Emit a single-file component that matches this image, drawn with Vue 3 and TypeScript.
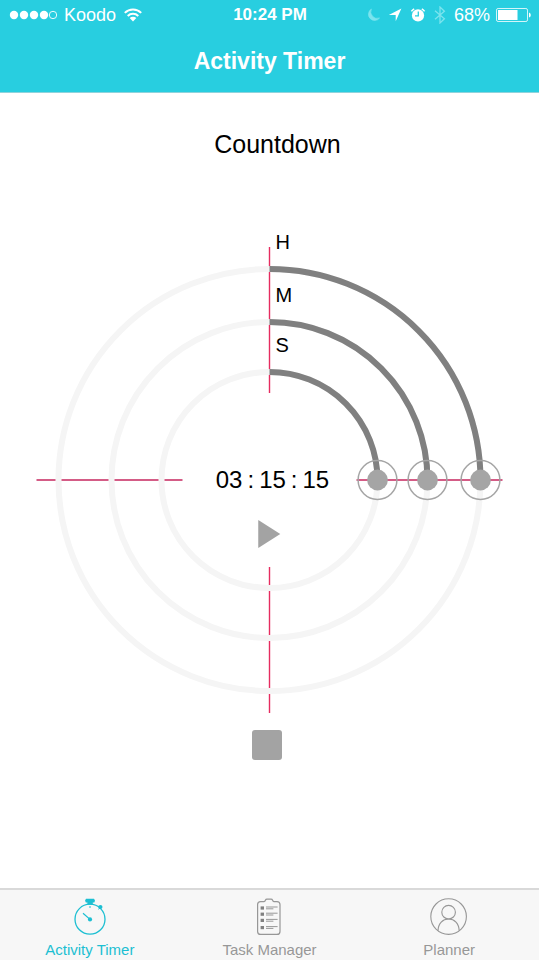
<script setup lang="ts">
import { computed, reactive, ref } from 'vue'

interface Unit {
  key: 'h' | 'm' | 's'
  label: string
  steps: number
  radius: number
}

const units: Unit[] = [
  { key: 'h', label: 'H', steps: 12, radius: 211 },
  { key: 'm', label: 'M', steps: 60, radius: 158 },
  { key: 's', label: 'S', steps: 60, radius: 108 },
]

const values = reactive({ h: 3, m: 15, s: 15 })
const running = ref(false)
const activeTab = ref('timer')

const tabs = [
  { id: 'timer', label: 'Activity Timer' },
  { id: 'tasks', label: 'Task Manager' },
  { id: 'planner', label: 'Planner' },
]

// The svg canvas is 479 x 500 with the dial's centre at its origin.
const rings = computed(() =>
  units.map((unit) => {
    const angle = (values[unit.key] / unit.steps) * Math.PI * 2
    const x = Math.sin(angle) * unit.radius
    const y = -Math.cos(angle) * unit.radius
    const large = angle > Math.PI ? 1 : 0
    return {
      ...unit,
      x,
      y,
      arc: `M0 ${-unit.radius}A${unit.radius} ${unit.radius} 0 ${large} 1 ${x} ${y}`,
      place: { left: `${((x + 239.5) / 479) * 100}%`, top: `${((y + 250) / 500) * 100}%` },
    }
  }),
)

const digits = computed(() => units.map((unit) => String(values[unit.key]).padStart(2, '0')))

function stop() {
  running.value = false
}
</script>

<template>
  <div class="screen">
    <header class="top">
      <div class="status">
        <div class="status-side">
          <svg class="signal" width="48" height="10" viewBox="0 0 48 10" aria-hidden="true">
            <circle v-for="n in 4" :key="n" :cx="n * 10 - 5" cy="5" r="4.2" fill="#fff" />
            <circle cx="44" cy="5" r="3.7" fill="none" stroke="#fff" stroke-width="0.9" />
          </svg>
          <span>Koodo</span>
          <svg class="wifi" width="18" height="14" viewBox="0 0 18 14" aria-hidden="true">
            <g fill="none" stroke="#fff" stroke-width="2">
              <path d="M0.8 4.9A11.8 11.8 0 0 1 17.2 4.9" />
              <path d="M3.7 8A7.6 7.6 0 0 1 14.3 8" />
            </g>
            <path d="M9 13.4L5.7 10A4.7 4.7 0 0 1 12.3 10Z" fill="#fff" />
          </svg>
        </div>
        <strong class="clock">10:24 PM</strong>
        <div class="status-side end">
          <svg width="13" height="14" viewBox="0 0 13 14" aria-hidden="true">
            <path d="M4.4 1A6.2 6.2 0 1 0 12.6 10A6.6 6.6 0 0 1 4.4 1Z" fill="#7ce4ee" stroke="#7ce4ee" stroke-width="0.6" />
          </svg>
          <svg width="14" height="14" viewBox="0 0 14 14" aria-hidden="true">
            <path d="M13.4 0.6L7.7 13.2V7H0.8Z" fill="#fff" />
          </svg>
          <svg width="16" height="14" viewBox="0 0 16 14" aria-hidden="true">
            <circle cx="8" cy="7.4" r="6.1" fill="#fff" />
            <path d="M1.4 3.4A8 8 0 0 1 4.2 0.8M14.6 3.4A8 8 0 0 0 11.8 0.8" stroke="#fff" stroke-width="1.5" fill="none" />
            <path d="M8.3 3.6V7.9H5" stroke="#28cee0" stroke-width="1.3" fill="none" />
          </svg>
          <svg width="12" height="18" viewBox="0 0 12 18" aria-hidden="true">
            <path d="M1 4.8L10.4 12.8L6 17V1L10.4 5.2L1 13.2" fill="none" stroke="#7ce4ee" stroke-width="1.3" />
          </svg>
          <span>68%</span>
          <svg class="battery" width="35" height="14" viewBox="0 0 35 14" aria-hidden="true">
            <rect x="0.5" y="0.5" width="31" height="13" rx="1.6" fill="none" stroke="#fff" stroke-opacity="0.8" />
            <rect x="2" y="2" width="19.5" height="10" fill="#fff" />
            <path d="M33 4.4Q34.8 5 34.8 7T33 9.6Z" fill="#fff" />
          </svg>
        </div>
      </div>
      <h1 class="title">Activity Timer</h1>
    </header>

    <main class="content">
      <h2 class="mode">Countdown</h2>

      <div class="dial">
        <svg class="dial-art" viewBox="-239.5 -250 479 500">
          <g fill="none" stroke="#f5f5f5" stroke-width="6">
            <circle v-for="ring in rings" :key="ring.key" :r="ring.radius" />
          </g>
          <g class="axis">
            <path d="M0 -233V-214M0 -208V-161M0 -155V-111M0 -105V-87" />
            <path d="M0 87V105M0 111V155M0 161V208M0 214V233" />
          </g>
          <g class="axis across">
            <path d="M-233 0H-214M-208 0H-161M-155 0H-111M-105 0H-87" />
            <path d="M87 0H233" />
          </g>
          <g fill="none" stroke="#808080" stroke-width="6">
            <path v-for="ring in rings" :key="ring.key" :d="ring.arc" />
          </g>
          <g v-for="ring in rings" :key="ring.key">
            <circle :cx="ring.x" :cy="ring.y" r="19.4" fill="none" stroke="#a5a5a5" stroke-width="1.5" />
            <circle :cx="ring.x" :cy="ring.y" r="10.4" fill="#a5a5a5" />
            <text :id="`label-${ring.key}`" class="unit" x="6" :y="-ring.radius - 20">{{ ring.label }}</text>
          </g>
        </svg>
        <input
          v-for="ring in rings"
          :key="ring.key"
          v-model.number="values[ring.key]"
          class="handle"
          type="range"
          min="0"
          :max="ring.steps - 1"
          :aria-labelledby="`label-${ring.key}`"
          :style="ring.place"
        />
        <div class="middle">
          <div class="readout">
            <template v-for="(pair, i) in digits" :key="i">
              <span v-if="i > 0">:</span>
              <span>{{ pair }}</span>
            </template>
          </div>
          <button class="plain" type="button" aria-label="Start" @click="running = !running">
            <svg width="24" height="30" viewBox="0 0 24 30"><path d="M1 1L23 15L1 29Z" fill="#a3a3a3" /></svg>
          </button>
        </div>
      </div>

      <button class="plain stop" type="button" aria-label="Stop" @click="stop">
        <svg width="30" height="30" viewBox="0 0 30 30"><rect width="30" height="30" rx="3" fill="#a3a3a3" /></svg>
      </button>
    </main>

    <nav class="tabs">
      <button
        v-for="tab in tabs"
        :key="tab.id"
        type="button"
        class="tab"
        :class="{ active: tab.id === activeTab }"
        @click="activeTab = tab.id"
      >
        <svg v-if="tab.id === 'timer'" width="38" height="38" viewBox="0 0 38 38">
          <circle cx="19" cy="21.2" r="15" fill="none" stroke="currentColor" stroke-width="1.3" />
          <path d="M15 0.8H23Q24.8 2.6 23.4 4.6H21.8V6.8H16.4V4.6H14.8Q13.2 2.6 15 0.8Z" fill="currentColor" />
          <circle cx="29.4" cy="9" r="2.1" fill="currentColor" />
          <path d="M27.6 11.4L29.4 9M19 8V10" stroke="currentColor" />
          <path d="M12 15.2L19 21.4" stroke="currentColor" stroke-width="1.2" />
          <circle cx="19" cy="21.4" r="2.1" fill="currentColor" />
        </svg>
        <svg v-else-if="tab.id === 'tasks'" width="38" height="38" viewBox="0 0 38 38">
          <path
            d="M14 3.6H10.6Q7.6 3.6 7.6 6.6V33.4Q7.6 36.4 10.6 36.4H27Q30 36.4 30 33.4V6.6Q30 3.6 27 3.6H24Q23 3.4 22.6 2.2Q22.2 1.2 21 1.2H17Q15.8 1.2 15.4 2.2Q15 3.4 14 3.6"
            fill="none" stroke="currentColor" stroke-width="1.2"
          />
          <g v-for="y in [8.4, 14.6, 20.8, 28]" :key="y">
            <rect x="10.6" :y="y" width="3.4" height="3.2" fill="#808080" />
            <path :d="`M16 ${y + 0.6}H27.6M16 ${y + 2.4}H23.4`" stroke="currentColor" stroke-width="1" />
          </g>
        </svg>
        <svg v-else width="38" height="38" viewBox="0 0 38 38">
          <g fill="none" stroke="currentColor" stroke-width="1.1">
            <circle cx="18.6" cy="18.6" r="17.8" />
            <circle cx="18.6" cy="14.2" r="6.8" />
            <path d="M8 32.8C8.2 25.2 12.8 21 18.6 21S29 25.2 29.2 32.8" />
          </g>
        </svg>
        <span>{{ tab.label }}</span>
      </button>
    </nav>
  </div>
</template>

<style>
body {
  background: #fff;
}
</style>

<style scoped>
.screen {
  display: flex;
  flex-direction: column;
  min-height: 100vh;
  font-family: "Liberation Sans", Arial, sans-serif;
  color: #000;
}

.top {
  color: #fff;
  background: #28cee0;
  border-bottom: 1px solid #8fd3dc;
}

.status {
  display: grid;
  grid-template-columns: 1fr auto 1fr;
  align-items: center;
  height: 30px;
  padding: 0 8px 0 9px;
  font-size: 18px;
}

.status-side {
  display: flex;
  align-items: center;
  gap: 8px;
}

.signal {
  margin-right: -1px;
}

.end {
  justify-content: flex-end;
}

.battery {
  margin-left: -2px;
}

.clock {
  font-size: 17px;
}

.title {
  margin: 0;
  padding: 17px 0;
  font-size: 23px;
  line-height: 28px;
  text-align: center;
}

.content {
  display: flex;
  flex: 1;
  flex-direction: column;
  align-items: center;
}

.mode {
  margin: 0;
  padding: 36px 0 71px 16px;
  font-size: 25px;
  font-weight: 400;
  line-height: 30px;
}

.dial {
  position: relative;
  width: 90%;
  max-width: 479px;
}

.dial-art {
  display: block;
  width: 100%;
}

.axis {
  fill: none;
  stroke: #e62c60;
  stroke-width: 1.4;
}

.across {
  stroke: #d45c86;
  stroke-width: 2;
}

.unit {
  font-size: 20px;
}

.handle {
  position: absolute;
  width: 40px;
  height: 40px;
  margin: 0;
  opacity: 0;
  cursor: pointer;
  transform: translate(-50%, -50%);
}

.middle {
  position: absolute;
  top: 50%;
  left: 50%;
  display: flex;
  flex-direction: column;
  align-items: center;
  gap: 24px;
  transform: translate(-50%, -15px);
}

.readout {
  display: flex;
  gap: 5px;
  padding-left: 6px;
  font-size: 24px;
  line-height: 30px;
}

.plain {
  display: block;
  padding: 0;
  background: none;
  border: 0;
  cursor: pointer;
}

.plain svg {
  display: block;
}

.stop {
  margin-right: 5px;
}

.tabs {
  display: grid;
  grid-template-columns: repeat(3, 1fr);
  background: #f7f7f7;
  border-top: 2px solid #d9d9d9;
}

.tab {
  display: flex;
  flex-direction: column;
  align-items: center;
  gap: 5px;
  padding: 8px 0 1px;
  font: inherit;
  font-size: 15px;
  line-height: 18px;
  color: #979797;
  background: none;
  border: 0;
  cursor: pointer;
}

.active {
  color: #1cbfd2;
}
</style>
